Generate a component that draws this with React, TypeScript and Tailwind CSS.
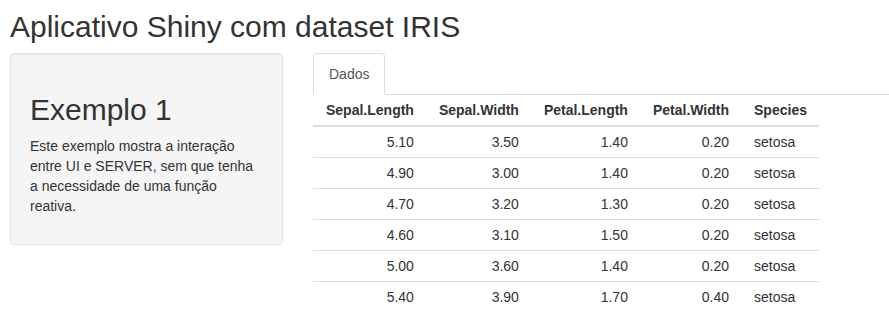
const rows = [
  ["5.10", "3.50", "1.40", "0.20", "setosa"],
  ["4.90", "3.00", "1.40", "0.20", "setosa"],
  ["4.70", "3.20", "1.30", "0.20", "setosa"],
  ["4.60", "3.10", "1.50", "0.20", "setosa"],
  ["5.00", "3.60", "1.40", "0.20", "setosa"],
  ["5.40", "3.90", "1.70", "0.40", "setosa"],
];

const headers = ["Sepal.Length", "Sepal.Width", "Petal.Length", "Petal.Width", "Species"];

export default function App() {
  return (
    <div
      className="min-h-[335px] bg-white pl-[10px] pt-[10px] text-[14px] leading-[20px] text-[#333]"
      style={{ fontFamily: '"Liberation Sans", Arial, sans-serif' }}
    >
      {/* Title */}
      <h2 className="mb-[10px] text-[30px] leading-[33px] font-normal">Aplicativo Shiny com dataset IRIS</h2>

      <div className="flex gap-[30px]">
        {/* Sidebar */}
        <div className="w-[273px] shrink-0">
          <div className="h-[192px] rounded-[4px] border border-[#e3e3e3] bg-[#f5f5f5] px-[19px] pt-[19px] shadow-[inset_0_1px_1px_rgba(0,0,0,0.05)]">
            <h2 className="mt-[20px] mb-[10px] text-[30px] leading-[33px] font-normal">Exemplo 1</h2>
            <p>
              Este exemplo mostra a interação
              <br />
              entre UI e SERVER, sem que tenha
              <br />
              a necessidade de uma função
              <br />
              reativa.
            </p>
          </div>
        </div>

        {/* Main panel */}
        <div className="flex-1">
          <ul className="flex border-b border-[#ddd]">
            <li className="-mb-px">
              <a className="block rounded-t-[4px] border border-[#ddd] border-b-transparent bg-white px-[15px] py-[10px] text-[#555]">
                Dados
              </a>
            </li>
          </ul>
          <table className="border-collapse">
            <thead>
              <tr>
                {headers.map((h, i) => (
                  <th
                    key={h}
                    className={`border-b-2 border-[#ddd] pl-[13px] pr-[12px] py-[5px] align-bottom font-bold ${
                      i === 4 ? "text-left" : "text-right"
                    }`}
                  >
                    {h}
                  </th>
                ))}
              </tr>
            </thead>
            <tbody>
              {rows.map((r, ri) => (
                <tr key={ri}>
                  {r.map((c, ci) => (
                    <td
                      key={ci}
                      className={`${ri > 0 ? "border-t border-[#ddd]" : ""} pl-[13px] pr-[12px] py-[5px] ${
                        ci === 4 ? "text-left" : "text-right"
                      }`}
                    >
                      {c}
                    </td>
                  ))}
                </tr>
              ))}
            </tbody>
          </table>
        </div>
      </div>
    </div>
  );
}
